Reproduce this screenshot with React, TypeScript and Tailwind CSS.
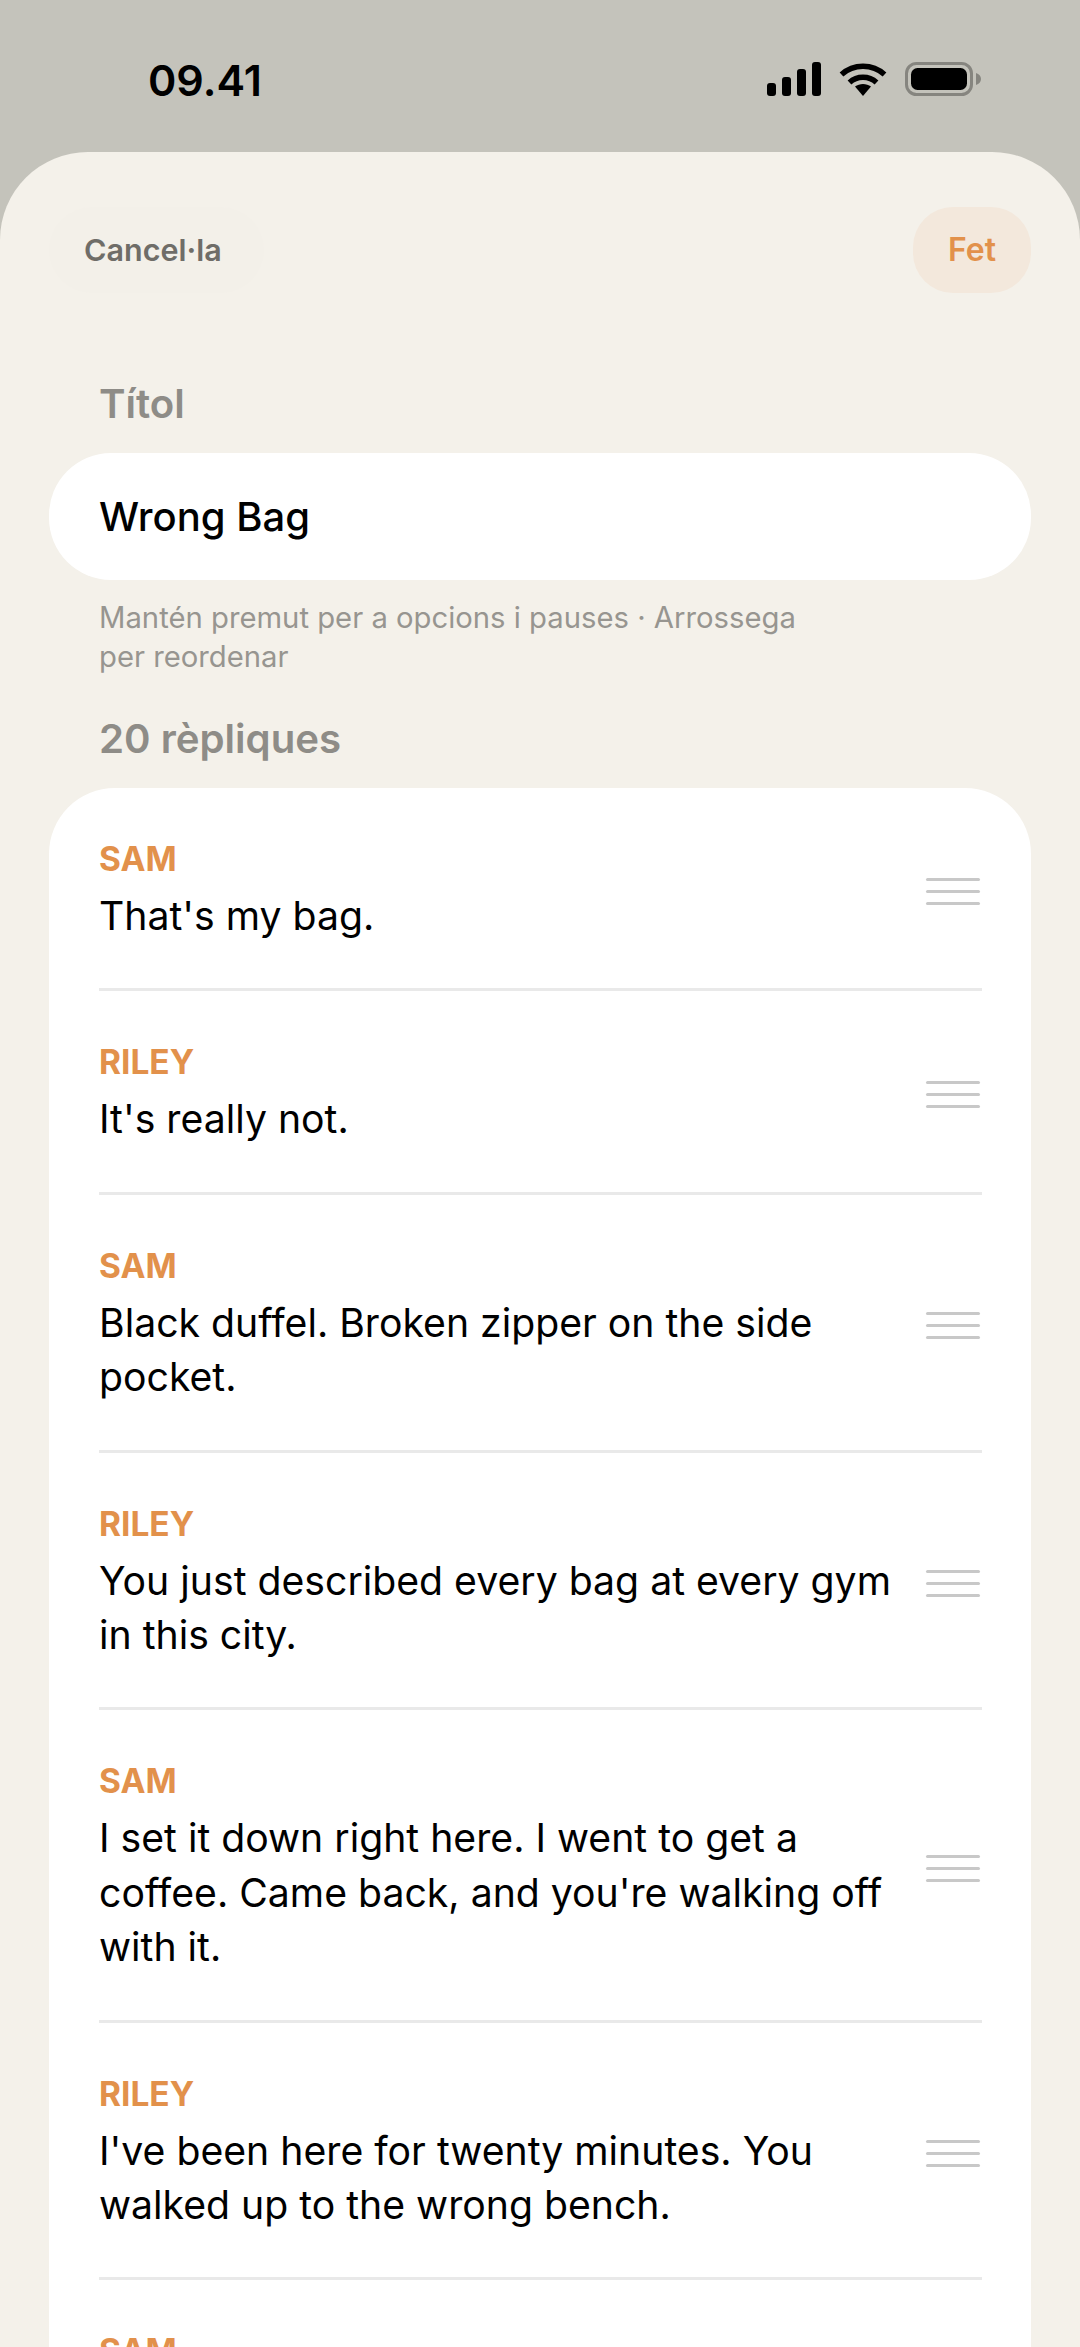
const lines = [
  { who: 'SAM', text: "That's my bag." },
  { who: 'RILEY', text: "It's really not." },
  { who: 'SAM', text: 'Black duffel. Broken zipper on the side pocket.' },
  { who: 'RILEY', text: 'You just described every bag at every gym in this city.' },
  { who: 'SAM', text: "I set it down right here. I went to get a coffee. Came back, and you're walking off with it." },
  { who: 'RILEY', text: "I've been here for twenty minutes. You walked up to the wrong bench." },
  { who: 'SAM', text: 'That is not the wrong bench.' },
];

function StatusIcons() {
  return (
    <div className="flex items-center gap-[18px]">
      <svg width="54" height="34" viewBox="0 0 54 34" fill="black">
        <rect x="0" y="21" width="9" height="13" rx="3" />
        <rect x="15" y="15" width="9" height="19" rx="3" />
        <rect x="30" y="7" width="9" height="27" rx="3" />
        <rect x="45" y="0" width="9" height="34" rx="3" />
      </svg>
      <svg width="48" height="34" viewBox="0 0 48 34" fill="none" stroke="black" strokeWidth="5.5">
        <path d="M2.5 12.5C14.5 1.5 33.5 1.5 45.5 12.5" />
        <path d="M10.5 20.5C18 13.5 30 13.5 37.5 20.5" />
        <path d="M16 24.5C20.5 21 27.5 21 32 24.5L24 34Z" fill="black" stroke="none" />
      </svg>
      <svg width="76" height="34" viewBox="0 0 76 34" fill="none">
        <rect x="1.5" y="1.5" width="65" height="31" rx="10" stroke="#86857f" strokeWidth="3" />
        <rect x="6" y="6" width="56" height="22" rx="6.5" fill="black" />
        <path d="M71 11C74 12 76 14 76 17C76 20 74 22 71 23Z" fill="#86857f" />
      </svg>
    </div>
  );
}

function DragHandle() {
  return (
    <div className="flex w-[54px] shrink-0 flex-col gap-[9px]">
      <div className="h-[3px] rounded-full bg-[#c8c8c8]" />
      <div className="h-[3px] rounded-full bg-[#c8c8c8]" />
      <div className="h-[3px] rounded-full bg-[#c8c8c8]" />
    </div>
  );
}

export default function App() {
  return (
    <div className="h-[2347px] w-[1080px] overflow-hidden bg-[#c4c3bb] font-['Inter',sans-serif] text-black">
      <div className="flex h-[152px] items-start justify-between pl-[148px] pr-[99px] pt-[62px]">
        <span className="text-[43px] font-semibold leading-[36px]">09.41</span>
        <StatusIcons />
      </div>

      <div className="h-[2195px] rounded-t-[88px] bg-[#f4f1ea] px-[49px] pt-[55px]">
        <div className="flex items-center justify-between">
          <button className="flex h-[86px] items-center rounded-[43px] bg-[#f3f0e9] pl-[35px] pr-[42px] text-[30.5px] font-semibold text-[#6f6d68]">
            Cancel·la
          </button>
          <button className="flex h-[86px] items-center rounded-[40px] bg-[#f3e8dc] px-[35px] text-[32px] font-semibold text-[#e2914b]">
            Fet
          </button>
        </div>

        <p className="mt-[86px] pl-[50px] text-[40.2px] font-semibold leading-[50px] text-[#8e8c87]">Títol</p>
        <div className="mt-[24px] flex h-[127px] items-center rounded-[62px] bg-white pl-[50px] text-[40px] font-medium">
          Wrong Bag
        </div>
        <p className="mt-[18px] w-[760px] pl-[50px] text-[29.25px] leading-[39px] text-[#979590]">
          Mantén premut per a opcions i pauses · Arrossega per reordenar
        </p>
        <p className="mt-[38px] pl-[50px] text-[40.2px] font-semibold leading-[50px] text-[#8e8c87]">20 rèpliques</p>

        <div className="mt-[24px] rounded-t-[66px] bg-white pl-[50px] pr-[49px]">
          {lines.map((line, i) => (
            <div key={i} className="flex items-center gap-[24px] border-b-[3px] border-[#e9e9e9] pb-[45px] pr-[2px] pt-[51px]">
              <div className="min-w-0 flex-1">
                <p className="text-[33.5px] font-bold leading-[40px] text-[#e2914b]">{line.who}</p>
                <p className="mt-[10px] text-[39.2px] leading-[54.4px]">{line.text}</p>
              </div>
              <DragHandle />
            </div>
          ))}
        </div>
      </div>
    </div>
  );
}
